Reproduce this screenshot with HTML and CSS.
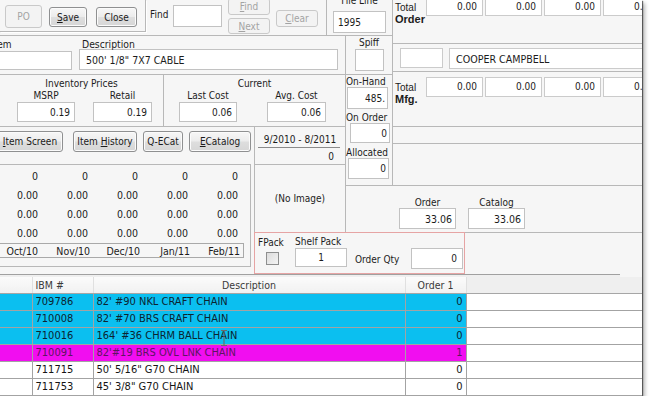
FILE: index.html
```html
<!DOCTYPE html>
<html>
<head>
<meta charset="utf-8">
<link rel="stylesheet" href="styles.css">
</head>
<body>
<div class="win">
  <div class="upper">
    <div class="toolbar">
      <div class="tgrp">
        <div class="btn dis po"><span>PO</span></div>
        <div class="btn save"><span><u>S</u>ave</span></div>
        <div class="btn close"><span>Close</span></div>
      </div>
      <div class="findlbl">Find</div>
      <div class="fld findin"></div>
      <div class="fnext">
        <div class="btn dis fbtn"><span><u>F</u>ind</span></div>
        <div class="btn dis nbtn"><span><u>N</u>ext</span></div>
      </div>
      <div class="btn dis clear"><span><u>C</u>lear</span></div>
      <div class="vsep"></div>
      <div class="fline">
        <div class="flbl">File Line</div>
        <div class="fld flin">1995</div>
      </div>
    </div>

    <div class="totals">
      <div class="tsec tsec1">
        <div class="tlbl"><span>Total</span><b>Order</b></div>
        <div class="tboxes top">
          <div class="tbox">0.00</div><div class="tbox">0.00</div><div class="tbox">0.00</div><div class="tbox">0.00</div>
        </div>
      </div>
      <div class="tsec tsec2">
        <div class="tbox ebox"></div>
        <div class="tbox cooper">COOPER CAMPBELL</div>
      </div>
      <div class="tsec tsec3">
        <div class="tlbl"><span>Total</span><b>Mfg.</b></div>
        <div class="tboxes mid">
          <div class="tbox">0.00</div><div class="tbox">0.00</div><div class="tbox">0.00</div><div class="tbox">0.00</div>
        </div>
      </div>
    </div>

    <div class="itemrow">
      <div class="itemfld">
        <div class="ilbl">Item</div>
        <div class="fld iin"></div>
      </div>
      <div class="descfld">
        <div class="dlbl">Description</div>
        <div class="fld din">500' 1/8" 7X7 CABLE</div>
      </div>
    </div>

    <div class="spiffcol">
      <div class="spifftop">
        <div class="slbl">Spiff</div>
        <div class="fld sbox"></div>
      </div>
      <div class="spifflow">
        <div class="qlbl q1">On-Hand</div>
        <div class="fld r qin q1i">485.</div>
        <div class="qlbl q2">On Order</div>
        <div class="fld r qin q2i">0</div>
        <div class="qlbl q3">Allocated</div>
        <div class="fld r qin q3i">0</div>
      </div>
    </div>

    <div class="prices">
      <div class="pgrp inv">
        <div class="ptitle">Inventory Prices</div>
        <div class="pfields">
          <div class="pf w58"><div class="plbl">MSRP</div><div class="fld r pin">0.19</div></div>
          <div class="pf w59 g18"><div class="plbl">Retail</div><div class="fld r pin">0.19</div></div>
        </div>
      </div>
      <div class="pgrp cur">
        <div class="ptitle">Current</div>
        <div class="pfields">
          <div class="pf w58"><div class="plbl">Last Cost</div><div class="fld r pin">0.06</div></div>
          <div class="pf w59 g30"><div class="plbl">Avg. Cost</div><div class="fld r pin">0.06</div></div>
        </div>
      </div>
    </div>

    <div class="btnrow">
      <div class="btn b1"><span><u>I</u>tem Screen</span></div>
      <div class="btn b2"><span>Item <u>H</u>istory</span></div>
      <div class="btn b3"><span>Q-ECat</span></div>
      <div class="btn b4"><span><u>E</u>Catalog</span></div>
    </div>

    <div class="datepanel">
      <div class="dtop">
        <div class="drange">9/2010 - 8/2011</div>
        <div class="dline"></div>
        <div class="dval">0</div>
      </div>
      <div class="noimg">(No Image)</div>
    </div>

    <div class="strips">
      <div class="strip1"></div>
    </div>

    <div class="stats">
      <div class="statbox">
        <div class="sgrid">
          <div>0</div><div>0</div><div>0</div><div>0</div><div>0</div>
          <div>0.00</div><div>0.00</div><div>0.00</div><div>0.00</div><div>0.00</div>
          <div>0.00</div><div>0.00</div><div>0.00</div><div>0.00</div><div>0.00</div>
          <div>0.00</div><div>0.00</div><div>0.00</div><div>0.00</div><div>0.00</div>
        </div>
        <div class="months">
          <div>Oct/10</div><div>Nov/10</div><div>Dec/10</div><div>Jan/11</div><div>Feb/11</div>
        </div>
      </div>
    </div>

    <div class="ordercat">
      <div class="ocf"><div class="oclbl">Order</div><div class="fld r ocin">33.06</div></div>
      <div class="ocf cat"><div class="oclbl">Catalog</div><div class="fld r ocin">33.06</div></div>
    </div>

    <div class="packbox">
      <div class="fpack">
        <div class="fplbl">FPack</div>
        <div class="chk"></div>
      </div>
      <div class="shelf">
        <div class="shlbl">Shelf Pack</div>
        <div class="fld shin">1</div>
      </div>
      <div class="oqlbl">Order Qty</div>
      <div class="fld r oqin">0</div>
    </div>

    <div class="filler"></div>
  </div>

  <div class="split"></div>

  <div class="gridwrap">
    <table class="gt">
      <colgroup>
        <col class="c0"><col class="c1"><col class="c2"><col class="c3"><col class="c4">
      </colgroup>
      <thead>
        <tr><th></th><th class="l">IBM #</th><th>Description</th><th>Order 1</th><th class="e"></th></tr>
      </thead>
      <tbody>
        <tr class="cy"><td></td><td>709786</td><td>82' #90 NKL CRAFT CHAIN</td><td class="n">0</td><td class="e"></td></tr>
        <tr class="cy"><td></td><td>710008</td><td>82' #70 BRS CRAFT CHAIN</td><td class="n">0</td><td class="e"></td></tr>
        <tr class="cy"><td></td><td>710016</td><td>164' #36 CHRM BALL CHAIN</td><td class="n">0</td><td class="e"></td></tr>
        <tr class="mg"><td></td><td>710091</td><td>82'#19 BRS OVL LNK CHAIN</td><td class="n">1</td><td class="e"></td></tr>
        <tr><td></td><td>711715</td><td>50' 5/16" G70 CHAIN</td><td class="n">0</td><td class="e"></td></tr>
        <tr><td></td><td>711753</td><td>45' 3/8" G70 CHAIN</td><td class="n">0</td><td class="e"></td></tr>
      </tbody>
    </table>
    <svg class="ibeam" width="8" height="18" viewBox="0 0 8 18">
      <path d="M1 1.5h2.2q0.8 0 0.8 0.8q0-0.8 0.8-0.8H7M4 2.3v13.4M1 16.5h2.2q0.8 0 0.8-0.8q0 0.8 0.8 0.8H7" fill="none" stroke="#6a6a6a" stroke-width="1.1"/>
    </svg>
  </div>
</div>
</body>
</html>
```

FILE: styles.css
```css
* { box-sizing: border-box; }
body {
  margin: 0;
  background: #ffffff;
  font-family: "DejaVu Sans Condensed", "DejaVu Sans", sans-serif;
  font-stretch: condensed;
  font-size: 10px;
  color: #1c1c1c;
}
u { text-decoration: underline; text-underline-offset: 1px; }

.win {
  position: relative;
  width: 642px;
  height: 396px;
  background: #f6f6f6;
  overflow: hidden;
  box-shadow: 1px 1px 1px rgba(0,0,0,.55), 3px 3px 4px rgba(0,0,0,.28);
}

.upper {
  display: grid;
  grid-template-columns: 254px 91px 47px 73px 177px;
  grid-template-rows: 36px 39px 52px 37px 21px 48px 41px;
}

/* generic controls */
.btn {
  display: flex;
  align-items: center;
  justify-content: center;
  border: 1px solid #8f9091;
  border-radius: 3px;
  background: linear-gradient(#f7f7f7, #ececec 48%, #dedede 52%, #d6d6d6);
  box-shadow: inset 0 0 0 1px #fbfbfb;
  color: #1a1a1a;
  white-space: nowrap;
  flex: none;
}
.btn span { white-space: pre; }
.btn.dis {
  border-color: #c9c9c9;
  background: #f3f3f3;
  box-shadow: none;
  color: #a3a3a3;
}
.fld {
  display: flex;
  align-items: center;
  background: #ffffff;
  border: 1px solid #c2c2c2;
  padding: 0 4px;
  white-space: nowrap;
  overflow: hidden;
  flex: none;
}
.fld.r { justify-content: flex-end; }

/* toolbar */
.toolbar {
  grid-row: 1; grid-column: 1 / 4;
  display: flex;
  align-items: flex-start;
  border-bottom: 1px solid #b8b8b8;
}
.tgrp {
  display: flex;
  align-items: flex-start;
  width: 146px;
  height: 32px;
  padding-left: 5px;
  border-right: 1px solid #b8b8b8;
  border-bottom: 1px solid #b8b8b8;
  box-shadow: 1px 1px 0 #ffffff;
  flex: none;
}
.po { margin-top: 5px; width: 37px; height: 23px; }
.save { margin-top: 7px; margin-left: 7px; width: 38px; height: 20px; }
.close { margin-top: 7px; margin-left: 9px; width: 41px; height: 20px; }
.findlbl { margin-left: 4px; margin-top: 9px; width: 23px; line-height: 12px; flex: none; }
.findin { margin-top: 5px; width: 49px; height: 22px; }
.fnext { margin-left: 6px; width: 42px; flex: none; display: flex; flex-direction: column; }
.fbtn { margin-top: -2px; height: 17px; }
.nbtn { margin-top: 3px; height: 16px; }
.clear { margin-left: 6px; margin-top: 10px; width: 42px; height: 17px; }
.vsep { margin-left: 8px; width: 1px; align-self: stretch; background: #b8b8b8; flex: none; }
.fline { margin-left: 6px; width: 53px; flex: none; display: flex; flex-direction: column; align-items: center; }
.flbl { margin-top: -5px; line-height: 12px; white-space: nowrap; }
.flin { margin-top: 4px; width: 53px; height: 22px; }

/* totals panel */
.totals {
  grid-row: 1 / 4; grid-column: 4 / 6;
  border-left: 1px solid #b8b8b8;
  border-bottom: 1px solid #b8b8b8;
  display: flex;
  flex-direction: column;
  font-family: "Liberation Sans", Arial, sans-serif;
  font-stretch: normal;
}
.tsec { display: flex; align-items: flex-start; border-bottom: 1px solid #b8b8b8; }
.tsec1 { height: 44px; }
.tsec2 { height: 28px; padding-top: 4px; }
.tsec3 { flex: 1; border-bottom: none; }
.tlbl {
  width: 33px; padding-left: 2px; flex: none;
  display: flex; flex-direction: column;
  font-size: 10px; line-height: 11px;
}
.tsec1 .tlbl { padding-top: 2px; }
.tsec3 .tlbl { padding-top: 10px; }
.tlbl b { font-size: 11px; line-height: 12px; }
.tboxes { display: flex; gap: 2px; flex: none; }
.tboxes.top { margin-top: -4px; }
.tboxes.mid { margin-top: 5px; }
.tbox {
  width: 57px; height: 20px; flex: none;
  background: #ffffff;
  border: 1px solid #cbcbcb;
  display: flex; align-items: center; justify-content: flex-end;
  padding-right: 5px;
  font-family: "DejaVu Sans Condensed", "DejaVu Sans", sans-serif;
  font-stretch: condensed;
}
.tboxes.top .tbox { align-items: flex-end; padding-bottom: 3px; }
.tboxes.mid .tbox { align-items: flex-start; padding-top: 3px; }
.ebox { margin-left: 7px; width: 43px; }
.cooper {
  margin-left: 6px; width: 210px; height: 21px;
  justify-content: flex-start; padding-left: 6px;
  font-size: 10.6px;
}

/* item row */
.itemrow {
  grid-row: 2; grid-column: 1 / 3;
  display: flex;
  align-items: flex-start;
  padding-top: 3px;
  border-bottom: 1px solid #b8b8b8;
}
.itemfld { margin-left: -9px; width: 81px; flex: none; }
.ilbl { line-height: 12px; }
.iin { width: 81px; height: 19px; }
.descfld { margin-left: 7px; width: 259px; flex: none; }
.dlbl { line-height: 10px; padding-left: 3px; font-size: 10.3px; }
.din { width: 259px; height: 21px; padding-left: 6px; font-size: 10.5px; }

/* spiff column */
.spiffcol {
  grid-row: 2 / 6; grid-column: 3;
  border-left: 1px solid #b8b8b8;
  display: flex;
  flex-direction: column;
}
.spifftop {
  height: 39px;
  border-bottom: 1px solid #b8b8b8;
  display: flex; flex-direction: column; align-items: center;
  padding-top: 1px;
}
.slbl { line-height: 12px; }
.sbox { width: 29px; height: 22px; }
.spifflow { display: flex; flex-direction: column; align-items: flex-start; }
.qlbl { line-height: 11px; white-space: nowrap; }
.q1 { margin-top: 1px; }
.q2 { margin-top: 3px; }
.q3 { margin-top: 4px; }
.qin { padding-right: 2px; }
.q1i { margin-left: 1px; width: 41px; height: 22px; }
.q2i { margin-left: 4px; width: 40px; height: 20px; }
.q3i { margin-left: 2px; width: 41px; height: 21px; }

/* prices */
.prices {
  grid-row: 3; grid-column: 1 / 3;
  display: flex;
  border-bottom: 1px solid #b8b8b8;
}
.pgrp { display: flex; flex-direction: column; padding-top: 3px; }
.inv { width: 164px; border-right: 1px solid #b8b8b8; }
.cur { flex: 1; }
.ptitle { text-align: center; line-height: 12px; }
.pfields { display: flex; }
.inv .pfields { padding-left: 17px; }
.cur .pfields { padding-left: 15px; }
.pf { display: flex; flex-direction: column; align-items: center; flex: none; }
.w58 { width: 58px; }
.w59 { width: 59px; }
.g18 { margin-left: 18px; }
.g30 { margin-left: 30px; }
.plbl { line-height: 12px; }
.pin { width: 100%; height: 20px; }

/* buttons row */
.btnrow {
  grid-row: 4; grid-column: 1;
  display: flex;
  align-items: flex-start;
  padding-top: 4px;
}
.btnrow .btn { height: 21px; }
.b1 { margin-left: -3px; width: 66px; }
.b2 { margin-left: 10px; width: 64px; }
.b3 { margin-left: 6px; width: 40px; }
.b4 { margin-left: 6px; width: 62px; }

/* date / image panel */
.datepanel {
  grid-row: 4 / 7; grid-column: 2;
  border-left: 1px solid #b8b8b8;
  display: flex;
  flex-direction: column;
}
.dtop { height: 38px; border-bottom: 1px solid #b8b8b8; padding-top: 6px; }
.drange { text-align: center; line-height: 13px; }
.dline { margin: 1px 5px 0 3px; border-top: 1px solid #8a8a8a; }
.dval { text-align: right; padding-right: 11px; line-height: 13px; margin-top: 2px; }
.noimg { flex: 1; display: flex; align-items: center; justify-content: center; padding-bottom: 1px; }

/* strips right */
.strips {
  grid-row: 4 / 6; grid-column: 4 / 6;
  border-left: 1px solid #b8b8b8;
}
.strip1 { height: 17px; border-bottom: 1px solid #b8b8b8; }

/* stats */
.stats { grid-row: 5 / 8; grid-column: 1; }
.statbox {
  width: 251px;
  height: 103px;
  border-top: 1px solid #b8b8b8;
  border-right: 1px solid #b8b8b8;
  border-bottom: 1px solid #b8b8b8;
  padding-top: 1px;
  overflow: hidden;
}
.sgrid {
  display: grid;
  grid-template-columns: repeat(5, 50px);
  grid-auto-rows: 19px;
  margin-left: -12px;
}
.sgrid div, .months div {
  display: flex; align-items: center; justify-content: flex-end;
  font-size: 10.5px;
}
.months {
  margin-top: 1px;
  width: 244px;
  height: 15px;
  border: 1px solid #a9a9a9;
  border-left: none;
  display: grid;
  grid-template-columns: repeat(5, 50px);
}
.months div { margin-left: -10px; margin-right: 10px; }
.months div:first-child { margin-left: -12px; margin-right: 12px; }

/* order / catalog */
.ordercat {
  grid-row: 6; grid-column: 3 / 6;
  border-top: 1px solid #b8b8b8;
  border-left: 1px solid #b8b8b8;
  display: flex;
  align-items: flex-start;
  padding: 11px 0 0 53px;
}
.ocf { display: flex; flex-direction: column; align-items: center; width: 57px; flex: none; }
.ocf.cat { margin-left: 12px; }
.oclbl { line-height: 11px; }
.ocin { width: 57px; height: 21px; padding-right: 3px; font-size: 10.5px; }

/* pack box */
.packbox {
  grid-row: 7; grid-column: 2 / 5;
  border: 1px solid #e6a4a4;
  display: flex;
  align-items: flex-start;
  margin-top: -1px;
}
.fpack { width: 40px; padding-left: 3px; padding-top: 4px; flex: none; }
.fplbl { line-height: 11px; }
.chk {
  margin-left: 8px;
  margin-top: 4px;
  width: 13px; height: 13px;
  border: 1px solid #8e8f8f;
  background: linear-gradient(135deg, #dcdcdc, #f4f4f4);
}
.shelf { width: 52px; padding-top: 3px; flex: none; }
.shlbl { line-height: 12px; white-space: nowrap; }
.shin { width: 52px; height: 19px; justify-content: center; padding-right: 4px; }
.oqlbl { margin-left: 8px; margin-top: 21px; width: 56px; line-height: 11px; flex: none; }
.oqin { margin-top: 15px; width: 52px; height: 21px; padding-right: 5px; }

.filler { grid-row: 7; grid-column: 5; border-top: 1px solid #b8b8b8; margin-top: -1px; }

.split { height: 3px; border-top: 1px solid #a0a0a0; background: #efefef; width: 620px; }

/* grid table */
.gridwrap { position: relative; }
.gt {
  width: 642px;
  table-layout: fixed;
  border-collapse: collapse;
  font-size: 11px;
}
.c0 { width: 32px; }
.c1 { width: 61px; }
.c2 { width: 312px; }
.c3 { width: 61px; }
.c4 { width: 176px; }
.gt th {
  height: 16px;
  padding: 0;
  font-weight: normal;
  font-size: 10.5px;
  color: #3a3a3a;
  background: linear-gradient(#fbfbfb, #f1f1f1);
  border-bottom: 1px solid #a6a6a6;
  border-right: 1px solid #e0e0e0;
  text-align: center;
  white-space: nowrap;
}
.gt th.l { text-align: left; padding-left: 3px; }
.gt th.e { border-right: none; background: #efefef; }
.gt td {
  height: 17px;
  padding: 0 0 0 3px;
  border-bottom: 1px solid #a3a3a3;
  border-right: 1px solid #a3a3a3;
  background: #ffffff;
  color: #151515;
  white-space: nowrap;
  overflow: hidden;
}
.gt td.n { text-align: right; padding: 0 3px 0 0; }
.gt td.e { border-right: none; }
.gt tr.cy td { background: #0bbff0; color: #0c2430; }
.gt tr.mg td { background: #f10ef0; color: #5d1561; }
.gt tr.cy td.e, .gt tr.mg td.e { background: #ffffff; }
.ibeam { position: absolute; left: 220px; top: 52px; }
```
